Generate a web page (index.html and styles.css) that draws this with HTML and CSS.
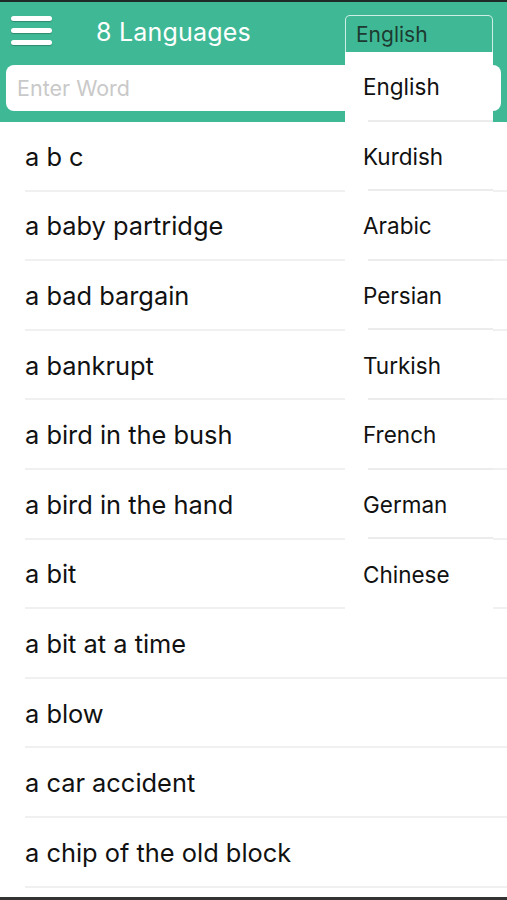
FILE: index.html
```html
<!DOCTYPE html>
<html>
<head>
<meta charset="utf-8">
<link rel="stylesheet" href="styles.css">
</head>
<body>
<div class="screen">
  <div class="topline"></div>
  <header class="header">
    <div class="bar">
      <div class="burger"><span></span><span></span><span></span></div>
      <div class="title">8 Languages</div>
    </div>
    <div class="search"><span class="placeholder">Enter Word</span></div>
  </header>
  <ul class="list">
    <li>a b c</li>
    <li>a baby partridge</li>
    <li>a bad bargain</li>
    <li>a bankrupt</li>
    <li>a bird in the bush</li>
    <li>a bird in the hand</li>
    <li>a bit</li>
    <li>a bit at a time</li>
    <li>a blow</li>
    <li>a car accident</li>
    <li>a chip of the old block</li>
  </ul>
  <div class="dropdown">
    <div class="select">English</div>
    <ul class="options">
      <li>English</li>
      <li>Kurdish</li>
      <li>Arabic</li>
      <li>Persian</li>
      <li>Turkish</li>
      <li>French</li>
      <li>German</li>
      <li>Chinese</li>
    </ul>
  </div>
  <div class="bottomline"></div>
</div>
</body>
</html>
```
FILE: styles.css
```css
html, body {
  margin: 0;
  padding: 0;
  background: #fff;
}
.screen {
  position: relative;
  width: 507px;
  height: 900px;
  overflow: hidden;
  font-family: Inter, "Open Sans", sans-serif;
}
.topline {
  height: 2px;
  background: #1f2a26;
}
.header {
  background: #3fb995;
  height: 120px;
  box-sizing: border-box;
  padding: 0 6px 10px;
  display: flex;
  flex-direction: column;
}
.bar {
  height: 63px;
  display: flex;
  align-items: center;
}
.burger {
  width: 41px;
  margin-left: 5px;
  margin-top: -6px;
  display: flex;
  flex-direction: column;
  gap: 7px;
}
.burger span {
  display: block;
  height: 5px;
  border-radius: 3px;
  background: #fff;
  box-shadow: 0 1px 1px rgba(0,0,0,0.25);
}
.title {
  margin-left: 44px;
  margin-top: -3px;
  color: #fff;
  font-size: 25px;
  letter-spacing: 0.2px;
}
.search {
  height: 46px;
  background: #fff;
  border-radius: 8px;
  display: flex;
  align-items: center;
  padding-left: 11px;
}
.placeholder {
  color: #c9c9c9;
  font-size: 21.5px;
}
.list {
  list-style: none;
  margin: 0;
  padding: 0;
}
.list li {
  height: 69.6px;
  box-sizing: border-box;
  margin-left: 25px;
  border-bottom: 2px solid #f0f0f0;
  display: flex;
  align-items: center;
  font-size: 25.4px;
  color: #111;
  padding-top: 1px;
}
.dropdown {
  position: absolute;
  left: 345px;
  top: 15px;
  width: 148px;
}
.select {
  height: 37px;
  box-sizing: border-box;
  border: 1.5px solid rgba(255,255,255,0.75);
  border-bottom: none;
  border-radius: 5px 5px 0 0;
  color: #1d3a31;
  font-size: 21px;
  padding-left: 10px;
  display: flex;
  align-items: center;
  padding-top: 1px;
}
.options {
  list-style: none;
  margin: 0;
  padding: 0;
  background: #fff;
}
.options li {
  height: 69.6px;
  box-sizing: border-box;
  margin-left: 23px;
  border-bottom: 2px solid #ececec;
  display: flex;
  align-items: center;
  font-size: 22.5px;
  color: #111;
  text-indent: -5px;
  padding-top: 2px;
}
.options li:last-child {
  border-bottom: none;
}
.bottomline {
  position: absolute;
  left: 0;
  right: 0;
  bottom: 0;
  height: 3px;
  background: #333;
}
```
